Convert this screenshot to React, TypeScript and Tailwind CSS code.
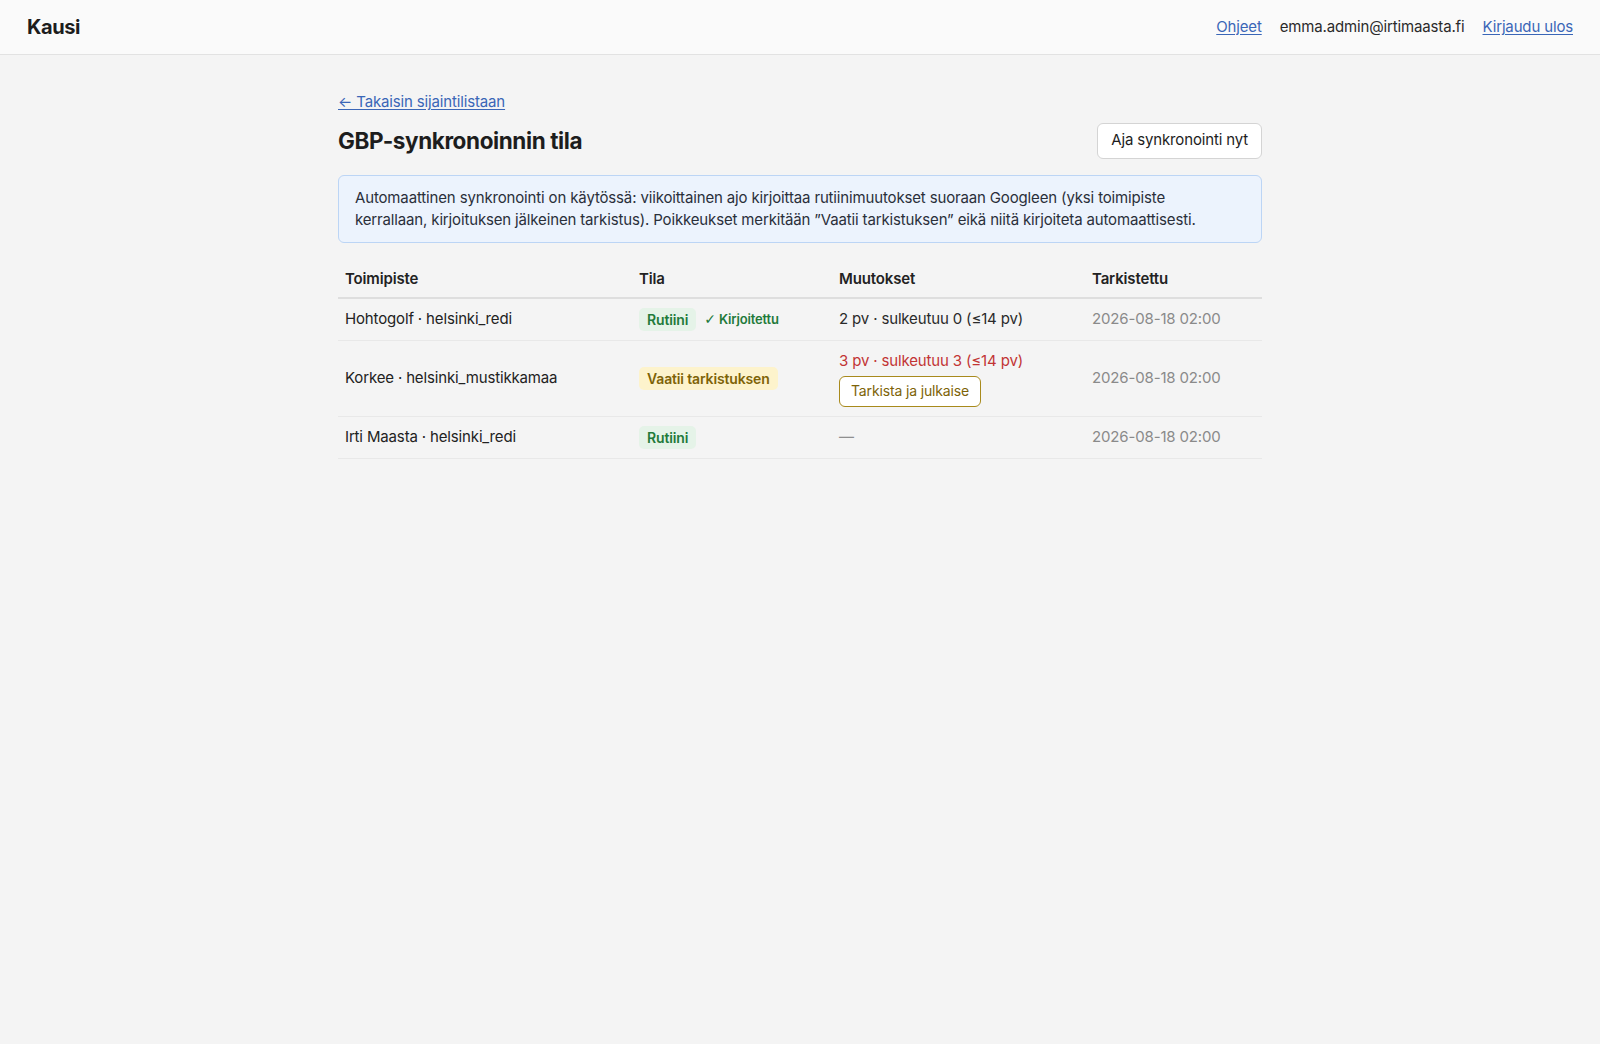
type Row = {
    name: string;
    status: 'routine' | 'review';
    written?: boolean;
    changes?: string;
    changesAlert?: boolean;
    checked: string;
};

const rows: Row[] = [
    {
        name: 'Hohtogolf · helsinki_redi',
        status: 'routine',
        written: true,
        changes: '2 pv · sulkeutuu 0 (≤14 pv)',
        checked: '2026-08-18 02:00',
    },
    {
        name: 'Korkee · helsinki_mustikkamaa',
        status: 'review',
        changes: '3 pv · sulkeutuu 3 (≤14 pv)',
        changesAlert: true,
        checked: '2026-08-18 02:00',
    },
    {
        name: 'Irti Maasta · helsinki_redi',
        status: 'routine',
        checked: '2026-08-18 02:00',
    },
];

function StatusBadge({ status }: { status: Row['status'] }) {
    if (status === 'review') {
        return (
            <span className="inline-block rounded-[5px] bg-[#fdf3cc] px-2 py-[1px] text-[14px] font-semibold leading-[21px] text-[#7d6308]">
                Vaatii tarkistuksen
            </span>
        );
    }
    return (
        <span className="inline-block rounded-[5px] bg-[#e5f3e8] px-2 py-[1px] text-[14px] font-semibold leading-[21px] text-[#227a3a]">
            Rutiini
        </span>
    );
}

export default function App() {
    return (
        <div className="min-h-screen bg-[#f4f4f4] font-['Inter',sans-serif] text-[15px] tracking-[-0.15px] text-[#222]">
            <header className="flex h-[55px] items-center justify-between border-b border-[#e2e2e2] bg-[#fafafa] px-[27px]">
                <span className="text-[20px] font-bold tracking-[-0.4px] text-[#1d1d1d]">
                    Kausi
                </span>
                <nav className="flex items-center gap-[18px] text-[15px]">
                    <a href="#" className="text-[#3a66b7] underline underline-offset-2">
                        Ohjeet
                    </a>
                    <span className="text-[#2a2a2a]">emma.admin@irtimaasta.fi</span>
                    <a href="#" className="text-[#3a66b7] underline underline-offset-2">
                        Kirjaudu ulos
                    </a>
                </nav>
            </header>

            <main className="mx-auto w-[924px] pt-[36px]">
                <a
                    href="#"
                    className="inline-block leading-[22px] text-[#3a66b7] underline underline-offset-2"
                >
                    ← Takaisin sijaintilistaan
                </a>

                <div className="mt-[9px] flex items-center justify-between">
                    <h1 className="text-[22.5px] font-bold tracking-[-0.4px] text-[#1d1d1d]">
                        GBP-synkronoinnin tila
                    </h1>
                    <button
                        type="button"
                        className="h-[36px] rounded-[6px] border border-[#d4d4d4] bg-white px-[13px] text-[15px] text-[#1d1d1d]"
                    >
                        Aja synkronointi nyt
                    </button>
                </div>

                <div className="mt-[16px] rounded-[6px] border border-[#bcd5f5] bg-[#ecf3fd] py-[11px] pl-4 pr-[40px] leading-[22px] text-[#2a2f3a]">
                    Automaattinen synkronointi on käytössä: viikoittainen ajo kirjoittaa
                    rutiinimuutokset suoraan Googleen (yksi toimipiste kerrallaan, kirjoituksen
                    jälkeinen tarkistus). Poikkeukset merkitään ”Vaatii tarkistuksen” eikä niitä
                    kirjoiteta automaattisesti.
                </div>

                <table className="mt-[18px] w-full border-collapse text-left">
                    <thead>
                        <tr className="border-b-2 border-[#dedede]">
                            <th className="w-[294px] px-[7px] py-[7px] font-semibold leading-[22px]">
                                Toimipiste
                            </th>
                            <th className="w-[200px] px-[7px] py-[7px] font-semibold leading-[22px]">
                                Tila
                            </th>
                            <th className="w-[253px] px-[7px] py-[7px] font-semibold leading-[22px]">
                                Muutokset
                            </th>
                            <th className="px-[7px] py-[7px] font-semibold leading-[22px]">
                                Tarkistettu
                            </th>
                        </tr>
                    </thead>
                    <tbody>
                        {rows.map((row) => (
                            <tr key={row.name} className="border-b border-[#e8e8e8]">
                                <td className="px-[7px] py-[9px] align-middle leading-[22px]">
                                    {row.name}
                                </td>
                                <td className="px-[7px] py-[9px] align-middle">
                                    <div className="flex items-center gap-2">
                                        <StatusBadge status={row.status} />
                                        {row.written && (
                                            <span className="text-[13px] font-semibold text-[#227a3a]">
                                                <span className="font-['DejaVu_Sans',sans-serif] text-[14px] font-normal">
                                                    ✓
                                                </span>{' '}
                                                Kirjoitettu
                                            </span>
                                        )}
                                    </div>
                                </td>
                                <td className="px-[7px] py-[9px] align-middle leading-[22px]">
                                    {row.changes ? (
                                        <div className="flex flex-col items-start">
                                            <span
                                                className={
                                                    row.changesAlert
                                                        ? 'text-[#c23434]'
                                                        : 'text-[#2a2a2a]'
                                                }
                                            >
                                                {row.changes}
                                            </span>
                                            {row.changesAlert && (
                                                <button
                                                    type="button"
                                                    className="mt-[4px] h-[31px] rounded-[6px] border-[1.5px] border-[#a88a1c] bg-white px-[11px] text-[14px] text-[#7d6308]"
                                                >
                                                    Tarkista ja julkaise
                                                </button>
                                            )}
                                        </div>
                                    ) : (
                                        <span className="text-[#8f8f8f]">—</span>
                                    )}
                                </td>
                                <td className="px-[7px] py-[9px] align-middle leading-[22px] text-[#8a8a8a]">
                                    {row.checked}
                                </td>
                            </tr>
                        ))}
                    </tbody>
                </table>
            </main>
        </div>
    );
}
